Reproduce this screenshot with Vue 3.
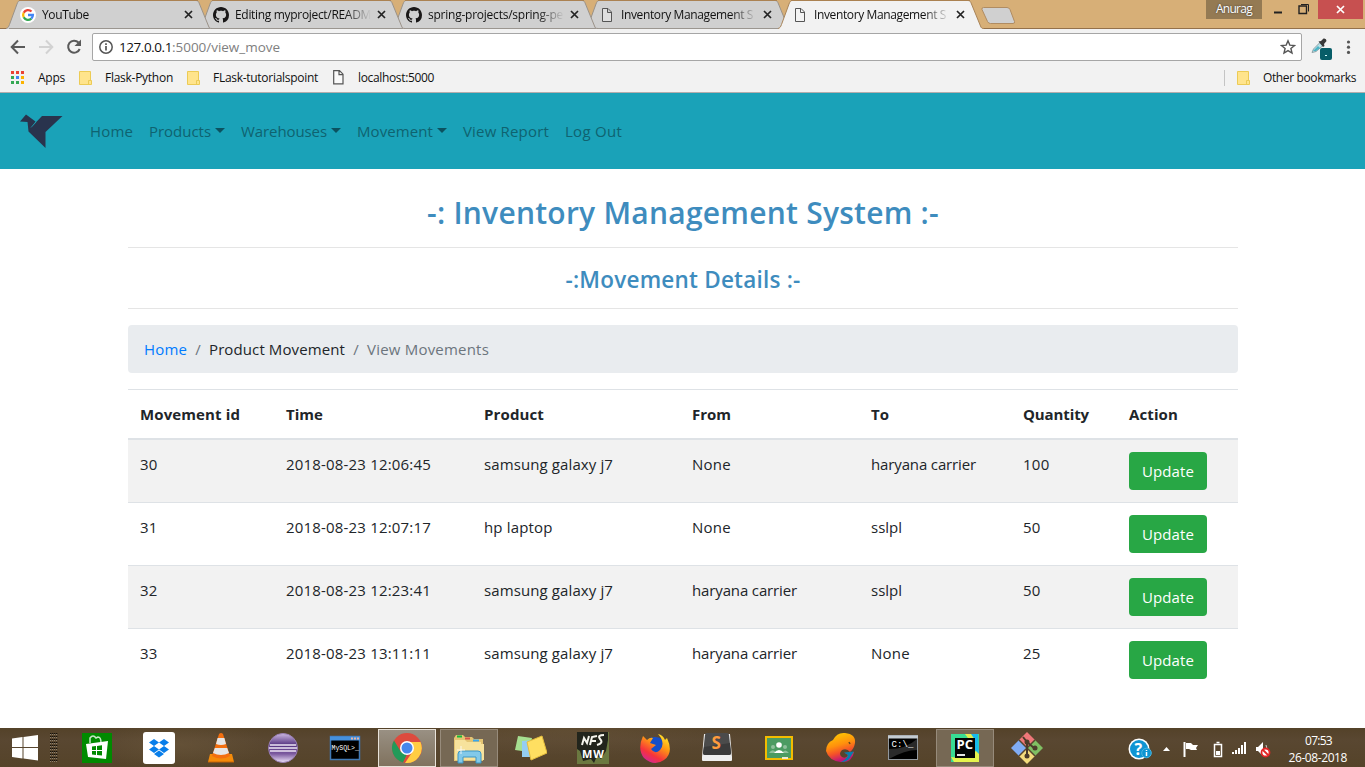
<script setup>
const spread = (el, { value }) => {
  if (!value) return
  el.style.letterSpacing = '0px'
  const natural = el.getBoundingClientRect().width
  el.style.letterSpacing = `${(value - natural) / el.textContent.length}px`
}
const vFit = { mounted: spread }

const tabs = [
  { title: 'YouTube', icon: 'google', w: 47 },
  { title: 'Editing myproject/READM', icon: 'github', w: 136 },
  { title: 'spring-projects/spring-pe', icon: 'github', w: 135 },
  { title: 'Inventory Management S', icon: 'page', w: 132 },
  { title: 'Inventory Management S', icon: 'page', w: 132, active: true },
]
const menu = [
  { label: 'Home', w: 43 },
  { label: 'Products', w: 62, drop: true },
  { label: 'Warehouses', w: 86, drop: true },
  { label: 'Movement', w: 76, drop: true },
  { label: 'View Report', w: 86 },
  { label: 'Log Out', w: 57 },
]
const heads = [['Movement id', 100], ['Time', 37], ['Product', 60], ['From', 39], ['To', 18], ['Quantity', 66], ['Action', 49]]
const widths = { None: 39, 'samsung galaxy j7': 129, 'haryana carrier': 105, sslpl: 31, 'hp laptop': 68.5, 100: 26.5 }
const fitFor = (t) => widths[t] || (t.length === 2 ? 17.7 : 145)
const rows = [
  ['30', '2018-08-23 12:06:45', 'samsung galaxy j7', 'None', 'haryana carrier', '100'],
  ['31', '2018-08-23 12:07:17', 'hp laptop', 'None', 'sslpl', '50'],
  ['32', '2018-08-23 12:23:41', 'samsung galaxy j7', 'haryana carrier', 'sslpl', '50'],
  ['33', '2018-08-23 13:11:11', 'samsung galaxy j7', 'haryana carrier', 'None', '25'],
]
const apps = ['store', 'dropbox', 'vlc', 'eclipse', 'mysql', 'chrome', 'explorer', 'notes', 'nfs', 'firefox', 'sublime', 'classroom', 'gecko', 'cmd', 'pycharm', 'git']
const dots = Array.from({ length: 40 }, (_, i) => ({ x: (i % 4) * 2, y: Math.floor(i / 4) * 3 }))
</script>

<template>
  <div class="screen">
    <div class="strip">
      <div v-for="(t, i) in tabs" :key="i" class="tab" :class="{ active: t.active, ['t' + i]: true }">
        <svg class="shape" width="206" height="29" viewBox="0 0 206 29">
          <path d="M0 28.500 C2 28 2.500 27 3.500 24.500 L11 4 C12 1.500 12.500 .5 14.500 .5 H190 C192 .5 192.500 1.500 193.500 4 L202.500 26 C203.200 28 203.800 28.500 206 28.500 V29 H0Z" :fill="t.active ? '#f2f2f2' : '#d0d0d0'" />
          <path d="M0 28.500 C2 28 2.500 27 3.500 24.500 L11 4 C12 1.500 12.500 .5 14.500 .5 H190 C192 .5 192.500 1.500 193.500 4 L202.500 26 C203.200 28 203.800 28.500 206 28.500" fill="none" :stroke="t.active ? '#a98458' : '#9b9288'" />
          <path d="M13 .5H192" stroke="#ab8252" />
          <path v-if="!t.active" d="M3 28.500H204" stroke="#9b9690" />
        </svg>
        <svg v-if="t.icon === 'google'" class="fav" width="16" height="16" viewBox="0 0 16 16">
          <circle cx="8" cy="8" r="8" fill="#fff" />
          <g fill="none" stroke-width="2.300"><path d="M11.500 4.500A4.900 4.900 0 0 0 3.700 5.700" stroke="#ea4335" /><path d="M3.700 5.700A5 5 0 0 0 3.700 10.300" stroke="#fbbc05" /><path d="M3.700 10.300A4.900 4.900 0 0 0 11.300 11.600" stroke="#34a853" /><path d="M8 8H12.900A5 5 0 0 1 11.300 11.600" stroke="#4285f4" /></g>
        </svg>
        <svg v-else-if="t.icon === 'github'" class="fav" width="16" height="16" viewBox="0 0 16 16"><path fill="#191717" d="M8 0C3.580 0 0 3.580 0 8c0 3.540 2.290 6.530 5.470 7.590.4.070.55-.17.55-.38 0-.19-.01-.82-.01-1.490-2.010.37-2.530-.49-2.690-.94-.09-.23-.48-.94-.82-1.130-.28-.15-.68-.52-.01-.53.63-.01 1.080.58 1.230.82.72 1.210 1.870.87 2.330.66.070-.52.28-.87.51-1.070-1.780-.2-3.640-.89-3.640-3.950 0-.87.31-1.590.82-2.150-.08-.2-.36-1.020.08-2.120 0 0 .67-.21 2.200.82.64-.18 1.320-.27 2-.27s1.360.09 2 .27c1.530-1.040 2.200-.82 2.200-.82.44 1.100.16 1.920.08 2.120.51.56.82 1.270.82 2.150 0 3.070-1.870 3.750-3.650 3.950.29.25.54.73.54 1.480 0 1.070-.01 1.930-.01 2.200 0 .21.15.46.55.38A8.010 8.010 0 0 0 16 8c0-4.420-3.580-8-8-8z" /></svg>
        <svg v-else class="fav" width="16" height="16" viewBox="0 0 16 16"><path d="M3.500 1.500H9L12.500 5V14.500H3.500Z M8.500 1.500V5.500H12.500" fill="#f5f5f5" fill-opacity=".4" stroke="#555" /></svg>
        <div class="title"><span v-fit="t.w">{{ t.title }}</span></div>
        <svg class="close" width="9" height="9" viewBox="0 0 9 9"><path d="M1 1L8 8M8 1L1 8" stroke="#222" stroke-width="1.700" /></svg>
      </div>
      <svg class="newtab" width="35" height="18" viewBox="0 0 35 18"><path d="M2.500 .5H26Q28 .5 29 2.500L33.500 14.500Q34 16.500 32 16.500H9.500Q7.500 16.500 6.500 14.500L1 2.500Q.5 .5 2.500 .5Z" fill="#d0d0d0" stroke="#b08c62" /></svg>
      <div class="window">
        <div class="user"><span v-fit="36">Anurag</span></div>
        <svg class="ctl" width="56" height="19" viewBox="0 0 56 19"><path d="M12 12.500H20" stroke="#222" stroke-width="2" /><path d="M37 6H44.500V13.500H37Z" fill="none" stroke="#222" stroke-width="1.400" /><path d="M39 4.500H46.500V11.500" fill="none" stroke="#222" /></svg>
        <div class="x"><svg width="9" height="9" viewBox="0 0 9 9"><path d="M1 1L8 8M8 1L1 8" stroke="#fff" stroke-width="1.700" /></svg></div>
      </div>
    </div>

    <div class="toolbar">
      <svg width="82" height="20" viewBox="0 0 82 20" fill="none" stroke-width="2">
        <path d="M15 10H2M8 3.500L1.700 10L8 16.500" stroke="#5a5a5a" />
        <path d="M29 10H42M36 3.500L42.300 10L36 16.500" stroke="#d2d2d2" />
        <path d="M68.500 5.500A6 6 0 1 0 69.700 12" stroke="#5a5a5a" /><path d="M71 2.500V9H64.500Z" fill="#5a5a5a" />
      </svg>
      <div class="omnibox">
        <svg width="14" height="14" viewBox="0 0 14 14"><circle cx="7" cy="7" r="6.200" fill="none" stroke="#555" stroke-width="1.500" /><path d="M7 6V10.500M7 3.300V5" stroke="#555" stroke-width="1.700" /></svg>
        <div class="url"><span v-fit="53" class="host">127.0.0.1</span><span v-fit="108">:5000/view_move</span></div>
        <svg class="star" width="16" height="16" viewBox="0 0 16 16"><path d="M8 1.800L9.800 6.100L14.500 6.500L10.900 9.500L12 14L8 11.600L4 14L5.100 9.500L1.500 6.500L6.200 6.100Z" fill="none" stroke="#555" stroke-width="1.400" /></svg>
      </div>
      <svg class="dropper" width="24" height="24" viewBox="0 0 24 24"><path d="M2 15.500L3.500 12L10 5.500L13 8.500L6 14.500Z" fill="#b6e2e9" stroke="#8da1a7" /><path d="M3 14L8 9L10 11L6 14Z" fill="#4cb4c5" /><path d="M8.500 4.500L11 4L13.500 1.500Q16.500 1 16.500 4L14 7L14.500 9L13 10Z" fill="#383838" /><rect x="10" y="11" width="12" height="12" rx="2" fill="#075d68" /><path d="M15 18.500H17" stroke="#d8ffff" /></svg>
      <svg class="more" width="5" height="15" viewBox="0 0 5 15" fill="#555"><circle cx="2.500" cy="2" r="1.600" /><circle cx="2.500" cy="7.200" r="1.600" /><circle cx="2.500" cy="12.400" r="1.600" /></svg>
    </div>

    <div class="bookmarks">
      <svg width="13" height="13" viewBox="0 0 13 13"><rect width="3" height="3" fill="#ea4335" /><rect x="5" width="3" height="3" fill="#ea4335" /><rect x="10" width="3" height="3" fill="#ea4335" /><rect y="5" width="3" height="3" fill="#34a853" /><rect x="5" y="5" width="3" height="3" fill="#4285f4" /><rect x="10" y="5" width="3" height="3" fill="#fbb300" /><rect y="10" width="3" height="3" fill="#34a853" /><rect x="5" y="10" width="3" height="3" fill="#34a853" /><rect x="10" y="10" width="3" height="3" fill="#fbb300" /></svg>
      <span v-fit="27" class="bk apps">Apps</span>
      <svg class="folder" width="13" height="14" viewBox="0 0 13 14"><path d="M.5 .5H11.500V9.500H12.500V13.500H.5Z" fill="#ffe48c" stroke="#eccb55" /><path d="M9.500 13V9.500H12" fill="none" stroke="#eccb55" /></svg>
      <span v-fit="68" class="bk fp">Flask-Python</span>
      <svg class="folder" width="13" height="14" viewBox="0 0 13 14"><path d="M.5 .5H11.500V9.500H12.500V13.500H.5Z" fill="#ffe48c" stroke="#eccb55" /><path d="M9.500 13V9.500H12" fill="none" stroke="#eccb55" /></svg>
      <span v-fit="105" class="bk ft">FLask-tutorialspoint</span>
      <svg width="11" height="15" viewBox="0 0 11 15"><path d="M.7 .7H6.500L10 4.200V13.800H.7Z M6 .7V4.700H10" fill="#fafafa" stroke="#555" stroke-width="1.200" /></svg>
      <span v-fit="76" class="bk lh">localhost:5000</span>
      <div class="other">
        <svg class="folder" width="13" height="14" viewBox="0 0 13 14"><path d="M.5 .5H11.500V9.500H12.500V13.500H.5Z" fill="#ffe48c" stroke="#eccb55" /><path d="M9.500 13V9.500H12" fill="none" stroke="#eccb55" /></svg>
        <span v-fit="93" class="bk">Other bookmarks</span>
      </div>
    </div>

    <nav class="nav">
      <svg class="logo" width="44" height="36" viewBox="0 0 44 36"><path d="M0 7.500L6 .5L15.500 7.500L11.500 13L22 2H42.500L25.500 18V34L8.500 17.500L7.500 8Z" fill="#29334d" /><path d="M11 13.500L16 8" stroke="#1ba2b8" stroke-width=".7" /></svg>
      <a v-for="m in menu" :key="m.label"><span v-fit="m.w">{{ m.label }}</span><i v-if="m.drop" /></a>
    </nav>

    <main>
      <h1><span v-fit="512">-: Inventory Management System :-</span></h1>
      <h2><span v-fit="235">-:Movement Details :-</span></h2>
      <div class="crumbs">
        <a v-fit="43">Home</a><em>/</em><span v-fit="136" class="now">Product Movement</span><em>/</em><span v-fit="122">View Movements</span>
      </div>
      <div class="row head"><div v-for="h in heads" :key="h[0]"><span v-fit="h[1]">{{ h[0] }}</span></div></div>
      <div v-for="r in rows" :key="r[0]" class="row">
        <div v-for="(c, i) in r" :key="i"><span v-fit="fitFor(c)">{{ c }}</span></div>
        <div><button><span v-fit="52">Update</span></button></div>
      </div>
    </main>

    <footer>
      <div class="start">
        <svg width="60" height="39" viewBox="0 0 60 39"><path d="M12 10.500L22.500 9V19H12ZM23.500 8.900L38 7V19H23.500ZM12 20H22.500V30.500L12 29ZM23.500 20H38V32.500L23.500 30.600Z" fill="#fff" /><g transform="translate(50 5)"><g v-for="(d, i) in dots" :key="i"><rect :x="d.x" :y="d.y" width="1.300" height="1" fill="#15110a" /><rect :x="d.x" :y="d.y + 1" width="1" height="1" fill="#8d806d" /></g></g></svg>
      </div>
      <div v-for="a in apps" :key="a" class="app" :class="a">
        <svg v-if="a === 'store'" width="32" height="32" viewBox="0 0 32 32"><rect x="1" y="1" width="30" height="30" fill="#008a00" /><path d="M9 11V6Q12 2 15 6L17 5Q20 5 20 11" fill="none" stroke="#c9e8c9" stroke-width="1.500" /><path d="M5 12L27 9L25 27L7 25Z" fill="#fff" /><path d="M11 14.500L15 14V18H11ZM16 13.900L21 13.200V18H16ZM11 19H15V23L11 22.500ZM16 19H21V23.600L16 23Z" fill="#008a00" /></svg>
        <svg v-else-if="a === 'dropbox'" width="32" height="32" viewBox="0 0 32 32"><rect width="32" height="32" rx="3" fill="#fff" /><path d="M11 7L16 10.500L11 14L6 10.500ZM21 7L26 10.500L21 14L16 10.500ZM11 14L16 17.500L11 21L6 17.500ZM21 14L26 17.500L21 21L16 17.500ZM11 22L16 18.500L21 22L16 25.500Z" fill="#087eea" /></svg>
        <svg v-else-if="a === 'vlc'" width="32" height="32" viewBox="0 0 32 32"><path d="M5 22H27L29 30H3Z" fill="#f58b0a" /><path d="M14 2Q16 0 18 2L25 24Q16 29 7 24Z" fill="#f36f10" /><path d="M12.600 6H19.400L21 12Q16 14 11 12ZM9.800 16H22.200L24 21Q16 25 8 21Z" fill="#e6e6e6" /><path d="M3 30H29" stroke="#c76405" /></svg>
        <svg v-else-if="a === 'eclipse'" width="32" height="32" viewBox="0 0 32 32"><defs><linearGradient id="ec" x2="0" y2="1"><stop stop-color="#cdb9e2" /><stop offset=".4" stop-color="#53317f" /><stop offset=".7" stop-color="#7c5a9f" /><stop offset="1" stop-color="#efe4fb" /></linearGradient></defs><circle cx="16" cy="16" r="14.500" fill="url(#ec)" stroke="#9a80b5" /><path d="M3 13H29M2 16H30M3 19H29" stroke="#eee6f5" stroke-width="1.400" /></svg>
        <svg v-else-if="a === 'mysql'" width="32" height="32" viewBox="0 0 32 32"><rect x="1.500" y="4.500" width="29" height="23" fill="#000" stroke="#4079b5" stroke-width="1.500" /><path d="M1 6.500H31" stroke="#4691de" stroke-width="4" /><path d="M22 6.500H24M25 6.500H27M28 6.500H30" stroke="#e6b5a5" stroke-width="2" /><text x="2.500" y="17.500" class="mono thin" font-size="6.500">MySQL&gt;_</text></svg>
        <svg v-else-if="a === 'chrome'" width="32" height="32" viewBox="0 0 32 32"><circle cx="16" cy="16" r="15" fill="#dd4b3e" /><path d="M3 8.500L10 20L16 22L12 30.500A15 15 0 0 1 3 8.500Z" fill="#229a59" /><path d="M29.500 10H17L22 19L14 30.900A15 15 0 0 0 29.500 10Z" fill="#ffcd42" /><circle cx="16" cy="16" r="7" fill="#fff" /><circle cx="16" cy="16" r="5.500" fill="#4587ed" /></svg>
        <svg v-else-if="a === 'explorer'" width="32" height="32" viewBox="0 0 32 32"><path d="M1 6L3 3H10L12 5H19L21 7H30V29H1Z" fill="#e4c472" /><path d="M2 8H12L14 10H28V12H31V28H2Z" fill="#f7e29c" /><path d="M4 4.500H9" stroke="#14b83b" stroke-width="2" /><path d="M12 6.500H17" stroke="#d95448" stroke-width="2" /><path d="M20 8.500H26" stroke="#3aa7eb" stroke-width="2" /><path d="M5 31V22Q5 19 8 19H25Q28 19 28 22V31H23V25H10V31Z" fill="#82c9e9" stroke="#3b96c5" /><path d="M8 14V22M4 18H12" stroke="#fff" stroke-width=".8" /></svg>
        <svg v-else-if="a === 'notes'" width="32" height="32" viewBox="0 0 32 32"><path d="M3 4L17 6L14 20L0 18Z" fill="#a6df90" /><path d="M7 9L22 8V25L7 25Z" fill="#94cdf3" /><path d="M12 10L27 4L32 21L16 28Z" fill="#ffdf61" stroke="#e5bd3d" /></svg>
        <svg v-else-if="a === 'nfs'" width="32" height="32" viewBox="0 0 32 32"><rect width="32" height="32" fill="#6b7940" /><path d="M0 0H31V8L29 19L24 27L20 24L17 31L14 27L6 29L3 19L0 17Z" fill="#22251c" /><path d="M5 13L7 6L10 11L12 4M13 13L15 5L20 4M14 9H19M27 3Q20 3 23 7Q27 11 20 13" fill="none" stroke="#f5f5ed" stroke-width="2" /><text x="5" y="26" class="bold" font-size="11" textLength="22">MW</text></svg>
        <svg v-else-if="a === 'firefox'" width="32" height="32" viewBox="0 0 32 32"><defs><linearGradient id="ff" x1=".8" x2=".2" y2="1"><stop stop-color="#ffe92d" /><stop offset=".35" stop-color="#ff9a13" /><stop offset=".7" stop-color="#f7333c" /><stop offset="1" stop-color="#cc25a5" /></linearGradient></defs><circle cx="16" cy="16" r="11" fill="#164ec7" /><path d="M4 4L8 8Q11 5 14 6L11 11L17 13L12 17Q16 23 21 18Q27 11 19 2Q24 3 26 8L28 6Q35 21 25 28Q15 35 5 26Q-2 17 4 4Z" fill="url(#ff)" /></svg>
        <svg v-else-if="a === 'sublime'" width="32" height="32" viewBox="0 0 32 32"><path d="M3 2H29L31 25V28Q31 29 30 29H2Q1 29 1 28V25Z" fill="#efefef" /><path d="M4 3Q4 1 6 1H26Q28 1 28 3L30 21Q30 23 28 23H4Q2 23 2 21Z" fill="#4b4b4b" /><path d="M3 15L29 11L30 21Q30 23 28 23H4Q2 23 2 21Z" fill="#3b3b3b" /><text x="10.500" y="17" class="bold orange" font-size="17">S</text></svg>
        <svg v-else-if="a === 'classroom'" width="32" height="32" viewBox="0 0 32 32"><rect x="3" y="5" width="26" height="22" fill="#4b9b62" stroke="#f4bc00" stroke-width="2" /><g fill="#8fc09b"><circle cx="10" cy="15" r="2" /><circle cx="22" cy="15" r="2" /><path d="M6 21Q9 16 13 20V21ZM19 21Q22 16 26 21Z" /></g><circle cx="16" cy="13" r="2.800" fill="#fff" /><path d="M11 21Q16 15 21 21Z" fill="#fff" /><path d="M19 26H25" stroke="#f0e7cc" stroke-width="2" /></svg>
        <svg v-else-if="a === 'gecko'" width="32" height="32" viewBox="0 0 32 32"><defs><linearGradient id="ge" x2=".3" y2="1"><stop stop-color="#ffd600" /><stop offset=".5" stop-color="#ff900d" /><stop offset=".75" stop-color="#f4502a" /><stop offset="1" stop-color="#c01579" /></linearGradient></defs><path d="M8 8Q12 0 20 1Q31 2 30 11Q29 17 25 20Q22 16 17 18Q13 22 17 25Q21 27 23 23L20 21L29 20Q27 31 16 30Q4 29 1 19Q1 11 8 8Z" fill="url(#ge)" /><path d="M19 20.500L29 19.500L26 24Q23 30 16 30Q22 27 23 23Z" fill="#067fae" /><path d="M24 10L25 12" stroke="#6c4a1b" stroke-width="1.500" /></svg>
        <svg v-else-if="a === 'cmd'" width="32" height="32" viewBox="0 0 32 32"><rect x="1.500" y="3.500" width="29" height="24" fill="#000" stroke="#92989d" /><path d="M1 5H31" stroke="#c4cbd1" stroke-width="3" /><path d="M2 17Q19 17 30 7V18Q18 18 2 27Z" fill="#2a2a2a" /><text x="4.500" y="15" class="mono thin" font-size="9" textLength="22">C:\_</text></svg>
        <svg v-else-if="a === 'pycharm'" width="32" height="32" viewBox="0 0 32 32"><rect x="2" y="2" width="28" height="28" fill="#39dc94" /><path d="M2 25L9 26L30 18V30H5Z" fill="#e5f44d" /><path d="M19 2H29L30 22L25 17Z" fill="#17b8ed" /><path d="M16 2H22L26 8V16Z" fill="#e2ed50" /><rect x="6" y="6" width="20" height="20" fill="#050505" /><text x="7.500" y="17" class="bold" font-size="12" textLength="16.500" lengthAdjust="spacingAndGlyphs">PC</text><path d="M8 23H16" stroke="#fff" stroke-width="1.800" /></svg>
        <svg v-else width="34" height="34" viewBox="0 0 34 34"><path d="M17 1L25 9L17 17L9 9Z" fill="#ef7779" /><path d="M9 9L17 17L9 25L1 17Z" fill="#80acf4" /><path d="M25 9L33 17L25 25L17 17Z" fill="#80bf63" /><path d="M17 17L25 25L17 33L9 25Z" fill="#f4dc7c" /><path d="M9 9L17 17L25 25M25 9L9 25" stroke="#57452f" stroke-width="1.500" /><path d="M13 6L17 11V25M17 11L24 17" fill="none" stroke="#4b3b2a" stroke-width="2" /><circle cx="17" cy="11" r="2.500" fill="#4b3b2a" /><circle cx="25" cy="17" r="2.500" fill="#4b3b2a" /><circle cx="17" cy="25" r="2.500" fill="#4b3b2a" /></svg>
      </div>
      <div class="tray">
        <svg width="150" height="39" viewBox="0 0 150 39"><circle cx="11" cy="21" r="10.500" fill="#fff" /><circle cx="11" cy="21" r="9" fill="#0f95d3" /><text x="6.500" y="27" class="bold" font-size="16">?</text><circle cx="18.500" cy="25" r="4.800" fill="#0f95d3" stroke="#4bb4de" /><path d="M18.500 24V28M18.500 22V23" stroke="#fff" stroke-width="1.500" /><path d="M35 23L38.500 19L42 23Z" fill="#fff" /><path d="M56.500 14V29" stroke="#fff" stroke-width="2" /><path d="M58 15H63L65 17H70L68 20L69 22H63L61 21H58Z" fill="#fff" /><path d="M86.500 16.500H93.500V28.500H86.500ZM88.500 14.500H91.500" fill="none" stroke="#fff" stroke-width="1.500" /><path d="M88 23H92V27H88Z" fill="#fff" /><path d="M105 26V24M108 26V22M111 26V20M114 26V17M117 26V14" stroke="#fff" stroke-width="2" /><path d="M128 19H130L135 14V28L130 23H128Z" fill="#fff" /><path d="M138 17Q140 21 138 25" fill="none" stroke="#ccc" /><circle cx="137.500" cy="24.500" r="4" fill="#fff" stroke="#e32525" stroke-width="1.800" /><path d="M135 22L140 27" stroke="#e32525" stroke-width="1.800" /></svg>
        <div class="clock"><span v-fit="27">07:53</span><span v-fit="58.500">26-08-2018</span></div>
      </div>
    </footer>
  </div>
</template>

<style>
html, body { overflow: hidden; }
</style>
<style scoped>
* { box-sizing: border-box; }
.screen { width: 1365px; height: 767px; background: #fff; display: flex; flex-direction: column; font-family: "Open Sans", "Noto Sans", sans-serif; font-size: 15px; line-height: 24px; color: #212529; overflow: hidden; }
svg { display: block; flex: none; }
span { white-space: nowrap; display: inline-block; }
.strip { height: 29px; background: #d7af77; border-bottom: 1px solid #94714b; display: flex; align-items: flex-start; padding-left: 6px; flex: none; }
.tab { position: relative; width: 206px; height: 29px; margin-right: -13px; display: flex; align-items: center; padding-left: 14px; flex: none; font-size: 12px; line-height: 28px; color: #111; }
.t0 { z-index: 5; } .t1 { z-index: 4; } .t2 { z-index: 3; } .t3 { z-index: 2; } .tab.active { z-index: 6; }
.shape { position: absolute; left: 0; top: 0; }
.fav { position: relative; }
.title { position: relative; width: 136px; margin-left: 6px; height: 28px; -webkit-mask-image: linear-gradient(90deg, #000 110px, transparent 136px); mask-image: linear-gradient(90deg, #000 110px, transparent 136px); }
.close { position: relative; margin-left: 6px; }
.newtab { margin: 7px 0 0 10px; }
.window { display: flex; margin-left: auto; margin-right: 2px; }
.user { width: 56px; height: 19px; background: #947a53; color: #fff; font-size: 12px; line-height: 18px; text-align: center; text-shadow: 0 0 2px #333; }
.x { width: 45px; height: 19px; background: #c75050; display: flex; align-items: center; justify-content: center; }
.toolbar { height: 36px; background: #f2f2f2; display: flex; align-items: center; padding-left: 10px; flex: none; }
.omnibox { width: 1210px; height: 28px; border: 1px solid #a6a6a6; border-radius: 2px; background: #fff; display: flex; align-items: center; padding: 0 5px 0 6px; }
.url { margin-left: 6px; font-size: 13.5px; line-height: 26px; color: #808080; display: flex; }
.host { color: #111; }
.star { margin-left: auto; }
.dropper { margin: 3px 0 0 8px; }
.more { margin-left: 12px; }
.bookmarks { height: 28px; background: #f2f2f2; border-bottom: 1px solid #b3adad; padding: 0 9px 2px 11px; display: flex; align-items: center; font-size: 12px; color: #111; flex: none; }
.apps { margin: 0 14px; } .fp { margin: 0 14px 0 13px; } .ft { margin: 0 15px 0 13px; } .lh { margin-left: 14px; }
.other { margin-left: auto; display: flex; align-items: center; gap: 13px; border-left: 1px solid #c4c4c4; padding-left: 12px; height: 16px; }
.bk { line-height: 20px; }
.nav { height: 76px; background: #1aa2b8; display: flex; align-items: center; padding-left: 20px; flex: none; color: #0f6370; }
.logo { margin: 2px 18px 0 0; }
.nav a { padding: 0 8px; display: flex; align-items: center; }
.nav i { margin: 0 0 2px 4px; border: 5px solid transparent; border-top-color: #0b5260; border-bottom: 0; }
main { width: 1110px; margin-left: 128px; flex: 1; padding-top: 24px; }
h1, h2 { margin: 0; color: #3e8cbe; font-weight: 600; text-align: center; border-bottom: 1px solid #e5e5e5; }
h1 { font-size: 30px; line-height: 40px; height: 55px; }
h2 { font-size: 22.500px; line-height: 28px; height: 61px; padding-top: 18px; }
.crumbs { height: 48px; background: #e9ecef; border-radius: 4px; margin: 16px 0; padding: 12px 16px; display: flex; color: #6c757d; }
.crumbs a { color: #007bff; } .crumbs em { width: 22px; text-align: center; font-style: normal; } .now { color: #212529; }
.row { display: grid; grid-template-columns: 146px 198px 208px 179px 152px 106px 121px; height: 63px; border-top: 1px solid #dee2e6; }
.row > div { padding: 12px; }
.row:nth-child(4) { height: 51px; border-bottom: 2px solid #dee2e6; font-weight: 700; }
.row:nth-child(5) { height: 62px; border-top: 0; }
.row:nth-child(odd) { background: #f2f2f2; }
button { width: 78px; height: 38px; padding: 0; border: 0; border-radius: 4px; background: #28a745; color: #fff; font: inherit; display: block; }
footer { height: 39px; display: flex; flex: none; background: radial-gradient(ellipse 90px 24px at 178px 17px, #75604266, transparent), radial-gradient(ellipse 180px 25px at 565px 3px, #705b3f66, transparent), linear-gradient(180deg, #544229, #594731 30%, #554329); color: #fff; }
.start { width: 66px; }
.app { width: 62px; height: 39px; padding: 0 2px; display: flex; align-items: center; justify-content: center; }
.chrome, .explorer, .pycharm { width: 58px; margin: 1px 2px 0; height: 38px; background: #766854; border: 1px solid #978b7b; padding: 0; }
.chrome { background: linear-gradient(#999083, #80725e); border-color: #e8e2d9; }
.mono { font-family: "Liberation Mono", monospace; fill: #fff; font-weight: 700; }
.thin { font-weight: 400; }
.bold { font-family: "Open Sans", sans-serif; font-weight: 700; fill: #fff; }
.orange { fill: #ff9b3c; }
.tray { margin-left: auto; display: flex; padding-right: 18px; }
.clock { width: 69px; font-size: 12px; line-height: 17px; display: flex; flex-direction: column; align-items: flex-end; padding-top: 4px; }
.clock span:first-child { margin-right: 15px; }
</style>
